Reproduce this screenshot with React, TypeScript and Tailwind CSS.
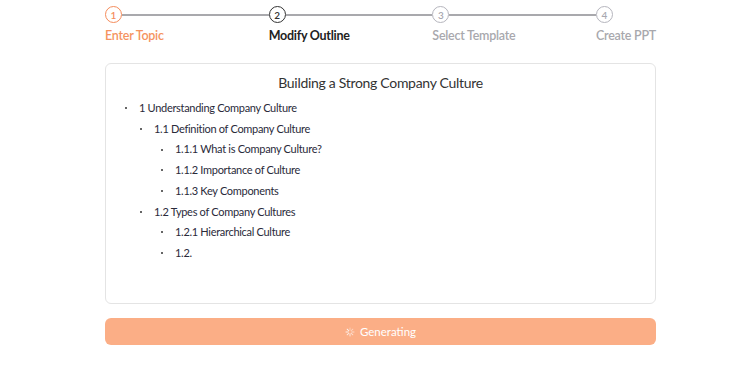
import React from "react";

const steps = [
  { n: 1, label: "Enter Topic", state: "done" },
  { n: 2, label: "Modify Outline", state: "active" },
  { n: 3, label: "Select Template", state: "todo" },
  { n: 4, label: "Create PPT", state: "todo" },
];

const items: { level: number; text: string }[] = [
  { level: 0, text: "1 Understanding Company Culture" },
  { level: 1, text: "1.1 Definition of Company Culture" },
  { level: 2, text: "1.1.1 What is Company Culture?" },
  { level: 2, text: "1.1.2 Importance of Culture" },
  { level: 2, text: "1.1.3 Key Components" },
  { level: 1, text: "1.2 Types of Company Cultures" },
  { level: 2, text: "1.2.1 Hierarchical Culture" },
  { level: 2, text: "1.2." },
];

function Spinner() {
  const lines = Array.from({ length: 8 });
  return (
    <svg width="10" height="10" viewBox="0 0 20 20" className="mr-[5px]">
      {lines.map((_, i) => (
        <line
          key={i}
          x1="10"
          y1="2"
          x2="10"
          y2="6.5"
          stroke="white"
          strokeWidth="2"
          strokeLinecap="round"
          opacity={0.4 + (i / 8) * 0.6}
          transform={`rotate(${i * 45} 10 10)`}
        />
      ))}
    </svg>
  );
}

export default function App() {
  return (
    <div
      className="w-[750px] h-[365px] bg-white"
      style={{ fontFamily: "Lato, 'Noto Sans', sans-serif" }}
    >
      <div className="w-[551px] ml-[105px] pt-[6px]">
        <div className="flex">
          {steps.map((s, i) => {
            const last = i === steps.length - 1;
            const circle =
              s.state === "done"
                ? "border-[#f58c5b] text-[#f58c5b]"
                : s.state === "active"
                ? "border-[#333] text-[#333]"
                : "border-[#b5b5bd] text-[#a8a8b0]";
            const label =
              s.state === "done"
                ? "text-[#f5935f] font-semibold"
                : s.state === "active"
                ? "text-[#222] font-bold"
                : "text-[#a8a8ad] font-semibold";
            return (
              <div key={s.n} className={last ? "flex-none" : "flex-1"}>
                <div className="flex items-center h-[17px]">
                  <div
                    className={`w-[17px] h-[17px] rounded-full border-[1.5px] flex items-center justify-center text-[10px] font-semibold leading-none ${circle}`}
                  >
                    {s.n}
                  </div>
                  {!last && <div className="flex-1 h-[2px] bg-[#a9a9ad]" />}
                </div>
                <div className={`mt-[5px] text-[12.5px] tracking-[-0.25px] leading-[16px] whitespace-nowrap ${label}`}>
                  {s.label}
                </div>
              </div>
            );
          })}
        </div>

        <div className="mt-[19px] h-[241px] border border-[#e4e4e4] rounded-[6px] px-[19px] pt-[9px]">
          <div className="text-center text-[14px] tracking-[-0.3px] leading-[20px] text-[#333]">
            Building a Strong Company Culture
          </div>
          <div className="mt-[5px]">
            {items.map((it, i) => (
              <div
                key={i}
                className="flex items-center h-[20.7px] text-[11px] tracking-[-0.3px] text-[#2a2a3a]"
                style={{ paddingLeft: it.level === 0 ? 0 : it.level === 1 ? 15 : 36 }}
              >
                <span className="w-[2px] h-[2px] bg-[#333] rounded-full mr-[12px]" />
                <span>{it.text}</span>
              </div>
            ))}
          </div>
        </div>

        <div className="mt-[14px] h-[27px] rounded-[6px] bg-[#fbae86] flex items-center justify-center text-white text-[11.5px]">
          <Spinner />
          Generating
        </div>
      </div>
    </div>
  );
}
